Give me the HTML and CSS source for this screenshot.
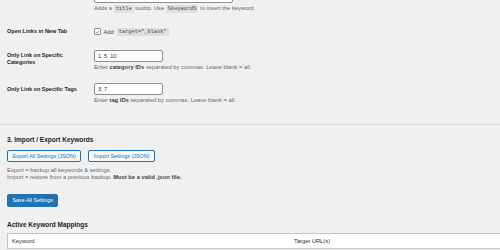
FILE: index.html
```html
<!DOCTYPE html>
<html lang="en">
<head>
    <meta charset="UTF-8">
    <meta name="viewport" content="width=device-width, initial-scale=1.0">
    <title>Auto Keyword Links Settings</title>
    <link rel="stylesheet" href="styles.css">
</head>
<body>
    <div class="wrap">
        <table class="form-table">
            <tr>
                <th></th>
                <td>
                    <input type="text" class="field wide" value="Read more about %keyword%">
                    <p class="description">Adds a <code>title</code> tooltip. Use <code>%keyword%</code> to insert the keyword.</p>
                </td>
            </tr>
            <tr>
                <th>Open Links in New Tab</th>
                <td>
                    <label class="check">
                        <span class="box">
                            <svg viewBox="0 0 10 10" width="6" height="6"><path d="M2 5.2 L4.2 7.4 L8.2 2.6" fill="none" stroke="#2271b1" stroke-width="1.6"/></svg>
                        </span>
                        Add <code>target="_blank"</code>
                    </label>
                </td>
            </tr>
            <tr>
                <th>Only Link on Specific Categories</th>
                <td>
                    <input type="text" class="field" value="1, 5, 10">
                    <p class="description">Enter <strong>category IDs</strong> separated by commas. Leave blank = all.</p>
                </td>
            </tr>
            <tr>
                <th>Only Link on Specific Tags</th>
                <td>
                    <input type="text" class="field" value="3, 7">
                    <p class="description">Enter <strong>tag IDs</strong> separated by commas. Leave blank = all.</p>
                </td>
            </tr>
        </table>

        <hr>

        <h2>3. Import / Export Keywords</h2>
        <div class="actions">
            <button class="button">Export All Settings (JSON)</button>
            <button class="button">Import Settings (JSON)</button>
        </div>
        <p class="description notes">Export = backup all keywords &amp; settings.<br>Import = restore from a previous backup. <strong>Must be a valid .json file.</strong></p>

        <button class="button-primary">Save All Settings</button>

        <h2 class="mappings-title">Active Keyword Mappings</h2>
        <table class="mappings">
            <thead>
                <tr>
                    <th class="col-keyword">Keyword</th>
                    <th>Target URL(s)</th>
                </tr>
            </thead>
        </table>
    </div>
</body>
</html>
```

FILE: styles.css
```css
html, body {
    overflow: hidden;
}
body {
    margin: 0;
    background-color: #f0f0f1;
    font-family: "Liberation Sans", Arial, sans-serif;
    font-size: 5.8px;
    color: #3c434a;
}
.wrap {
    padding-left: 7px;
    margin-top: -15px;
}
.form-table {
    border-collapse: collapse;
}
.form-table th {
    width: 80px;
    padding: 8.5px 7px 6px 0;
    text-align: left;
    vertical-align: top;
    font-size: 5.5px;
    font-weight: 600;
    line-height: 7px;
    color: #1d2327;
}
.form-table td {
    padding: 6px 0;
    vertical-align: top;
}
.field {
    display: block;
    width: 69px;
    height: 12px;
    box-sizing: border-box;
    margin: 0;
    padding: 0 3px;
    border: 1px solid #8c8f94;
    border-radius: 2px;
    background-color: white;
    font-family: "Liberation Sans", Arial, sans-serif;
    font-size: 5.5px;
    color: #2c3338;
}
.field.wide {
    width: 139px;
}
.description {
    margin: 2px 0 0;
    line-height: 7.5px;
    color: #646970;
}
.description strong {
    color: #3c434a;
}
code {
    font-family: "Liberation Mono", monospace;
    font-size: 5.3px;
    padding: 1px 2px;
    background-color: rgba(0,0,0,0.07);
    color: #3c434a;
}
.check {
    display: flex;
    align-items: center;
    gap: 3px;
    height: 12px;
    color: #3c434a;
}
.box {
    display: flex;
    align-items: center;
    justify-content: center;
    width: 6.5px;
    height: 6.5px;
    box-sizing: border-box;
    border: 1px solid #8c8f94;
    border-radius: 1px;
    background-color: white;
}
hr {
    border: 0;
    border-top: 1px solid #dcdcde;
    margin: 13px 0 0 -7px;
}
h2 {
    margin: 10.5px 0 0;
    font-size: 6.5px;
    font-weight: 700;
    line-height: 9px;
    color: #1d2327;
}
.mappings-title {
    margin-top: 13px;
}
.actions {
    display: flex;
    gap: 7px;
    margin-top: 5.5px;
}
.button, .button-primary {
    height: 12px;
    padding: 0 4.5px;
    border: 1px solid #2271b1;
    border-radius: 2px;
    background-color: #f6f7f7;
    color: #2271b1;
    font-family: "Liberation Sans", Arial, sans-serif;
    font-size: 5.4px;
    line-height: 10px;
}
.notes {
    margin-top: 5.5px;
    line-height: 7px;
}
.button-primary {
    display: block;
    height: 13px;
    margin-top: 12.5px;
    background-color: #2271b1;
    color: white;
}
.mappings {
    width: calc(100% + 10px);
    margin-top: 4.5px;
    border: 1px solid #c3c4c7;
    border-collapse: collapse;
    background-color: white;
}
.mappings th {
    height: 14px;
    padding: 0 4px;
    border-bottom: 1px solid #c3c4c7;
    text-align: left;
    font-weight: 400;
    font-size: 5.8px;
    color: #2c3338;
}
.col-keyword {
    width: 274px;
}
```
